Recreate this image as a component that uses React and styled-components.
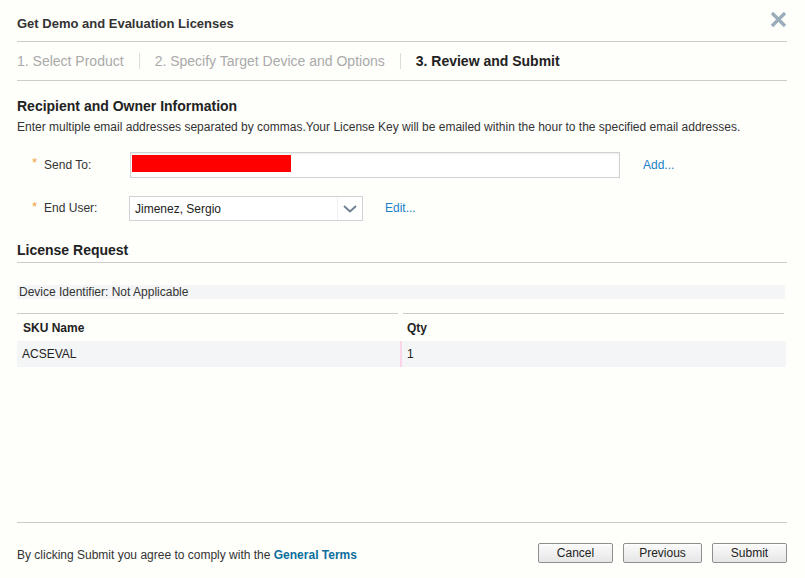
import styled, { createGlobalStyle } from "styled-components";

const GlobalStyle = createGlobalStyle`
  html, body {
    margin: 0;
    padding: 0;
    background: #fefefb;
  }
  body {
    font-family: "Liberation Sans", Arial, sans-serif;
    color: #333;
  }
`;

const Dialog = styled.div`
  height: 578px;
  box-sizing: border-box;
  padding: 0 18px 0 17px;
  display: flex;
  flex-direction: column;
  background: #fefefb;
`;

const Header = styled.div`
  height: 42px;
  display: flex;
  align-items: center;
  justify-content: space-between;
  border-bottom: 1px solid #cccccc;
  padding-top: 5px;
  box-sizing: border-box;

  h1 {
    margin: 0;
    font-size: 13px;
    font-weight: bold;
    color: #333;
  }
`;

const Close = styled.svg`
  width: 17px;
  height: 17px;
  margin-top: -7px;
`;

const Steps = styled.div`
  height: 39px;
  display: flex;
  align-items: center;
  border-bottom: 1px solid #cccccc;
  box-sizing: border-box;
`;

const Step = styled.div`
  font-size: 14px;
  line-height: 16px;
  padding: 0 15px;
  color: ${(p) => (p.$active ? "#222" : "#aaaaaa")};
  font-weight: ${(p) => (p.$active ? "bold" : "normal")};
  border-left: 1px solid #dddddd;

  &:first-child {
    padding-left: 0;
    border-left: none;
  }
`;

const SectionTitle = styled.h2`
  margin: ${(p) => p.$top}px 0 0;
  font-size: 14px;
  line-height: 18px;
  font-weight: bold;
  color: #222;
  padding-bottom: ${(p) => (p.$ruled ? "3px" : "0")};
  border-bottom: ${(p) => (p.$ruled ? "1px solid #cccccc" : "none")};
`;

const Hint = styled.p`
  margin: 4px 0 0;
  font-size: 12px;
  line-height: 16px;
  color: #333;
`;

const FieldRow = styled.div`
  display: flex;
  align-items: center;
  margin-top: ${(p) => p.$top}px;
`;

const Label = styled.label`
  width: ${(p) => p.$w}px;
  box-sizing: border-box;
  padding-left: 15px;
  padding-bottom: 1px;
  font-size: 12px;
  color: #333;
  display: flex;
  align-items: center;

  span {
    color: #f2a33a;
    font-size: 13px;
    margin-right: 7px;
    position: relative;
    top: -2px;
  }
`;

const TextBox = styled.div`
  width: 490px;
  height: 26px;
  box-sizing: border-box;
  border: 1px solid #cfd3d6;
  box-shadow: inset 0 1px 2px rgba(0, 0, 0, 0.08);
  background: #fff;
  padding: 2px 1px;
`;

const Redacted = styled.div`
  width: 159px;
  height: 17px;
  background: #ff0000;
`;

const Select = styled.div`
  width: 234px;
  height: 25px;
  box-sizing: border-box;
  border: 1px solid #cfd3d6;
  background: #fff;
  display: flex;
  align-items: center;
  justify-content: space-between;
  padding-left: 5px;
  font-size: 12px;
  color: #222;
`;

const Arrow = styled.div`
  width: 24px;
  height: 100%;
  border-left: 1px solid #f0f0f0;
  display: flex;
  align-items: center;
  justify-content: center;
`;

const Link = styled.a`
  font-size: 12px;
  color: #1a80c8;
  margin-left: ${(p) => p.$left}px;
  padding-bottom: 1px;
  text-decoration: none;
  cursor: pointer;
`;

const InfoBar = styled.div`
  margin-top: 22px;
  height: 14px;
  background: #f3f5f6;
  font-size: 12px;
  line-height: 14px;
  padding-left: 2px;
  margin-right: 2px;
`;

const TableHead = styled.div`
  margin-top: 14px;
  display: grid;
  grid-template-columns: 381px 381px;
  column-gap: 5px;
`;

const HeadCell = styled.div`
  border-top: 1px solid #cccccc;
  height: 27px;
  display: flex;
  align-items: center;
  padding-left: ${(p) => p.$pad}px;
  font-size: 12px;
  font-weight: bold;
  color: #222;
`;

const TableRow = styled.div`
  display: grid;
  grid-template-columns: 383px 1fr;
  height: 26px;
  background: #f3f5f6;
  margin-right: 1px;
`;

const Cell = styled.div`
  display: flex;
  align-items: center;
  font-size: 12px;
  color: #222;
  padding-left: ${(p) => p.$pad}px;
  border-left: ${(p) => (p.$marked ? "2px solid #fbd6e8" : "none")};
`;

const Footer = styled.div`
  margin-top: auto;
  border-top: 1px solid #cccccc;
  padding: 20px 0 15px;
  display: flex;
  align-items: center;
  justify-content: space-between;
  font-size: 12px;
  color: #333;

  b {
    color: #0b6e9e;
  }
`;

const Terms = styled.div`
  padding-top: 3px;
`;

const Buttons = styled.div`
  display: flex;
  gap: 10px;
`;

const Button = styled.button`
  width: ${(p) => p.$w}px;
  height: 20px;
  padding: 0;
  font-family: "Liberation Sans", Arial, sans-serif;
  font-size: 12px;
  color: #222;
  border: 1px solid #8f8f8f;
  border-radius: 2px;
  background: linear-gradient(#fbfbfb, #e6e6e6);
  box-shadow: inset 0 1px 0 #fff;
`;

export default function App() {
  return (
    <>
      <GlobalStyle />
      <Dialog>
        <Header>
          <h1>Get Demo and Evaluation Licenses</h1>
          <Close viewBox="0 0 17 17">
            <path
              d="M2 2 L15 15 M15 2 L2 15"
              stroke="#9aacba"
              strokeWidth="3.2"
              strokeLinecap="butt"
            />
          </Close>
        </Header>

        <Steps>
          <Step>1. Select Product</Step>
          <Step>2. Specify Target Device and Options</Step>
          <Step $active>3. Review and Submit</Step>
        </Steps>

        <SectionTitle $top={16}>Recipient and Owner Information</SectionTitle>
        <Hint>
          Enter multiple email addresses separated by commas.Your License Key
          will be emailed within the hour to the specified email addresses.
        </Hint>

        <FieldRow $top={17}>
          <Label $w={113}>
            <span>*</span>Send To:
          </Label>
          <TextBox>
            <Redacted />
          </TextBox>
          <Link $left={23}>Add...</Link>
        </FieldRow>

        <FieldRow $top={18}>
          <Label $w={112}>
            <span>*</span>End User:
          </Label>
          <Select>
            Jimenez, Sergio
            <Arrow>
              <svg width="14" height="8" viewBox="0 0 14 8">
                <path
                  d="M1 1 L7 6.5 L13 1"
                  fill="none"
                  stroke="#6d7f92"
                  strokeWidth="1.8"
                />
              </svg>
            </Arrow>
          </Select>
          <Link $left={22}>Edit...</Link>
        </FieldRow>

        <SectionTitle $top={20} $ruled>
          License Request
        </SectionTitle>

        <InfoBar>Device Identifier: Not Applicable</InfoBar>

        <TableHead>
          <HeadCell $pad={6}>SKU Name</HeadCell>
          <HeadCell $pad={4}>Qty</HeadCell>
        </TableHead>
        <TableRow>
          <Cell $pad={5}>ACSEVAL</Cell>
          <Cell $pad={5} $marked>
            1
          </Cell>
        </TableRow>

        <Footer>
          <Terms>
            By clicking Submit you agree to comply with the <b>General Terms</b>
          </Terms>
          <Buttons>
            <Button $w={75}>Cancel</Button>
            <Button $w={79}>Previous</Button>
            <Button $w={75}>Submit</Button>
          </Buttons>
        </Footer>
      </Dialog>
    </>
  );
}
